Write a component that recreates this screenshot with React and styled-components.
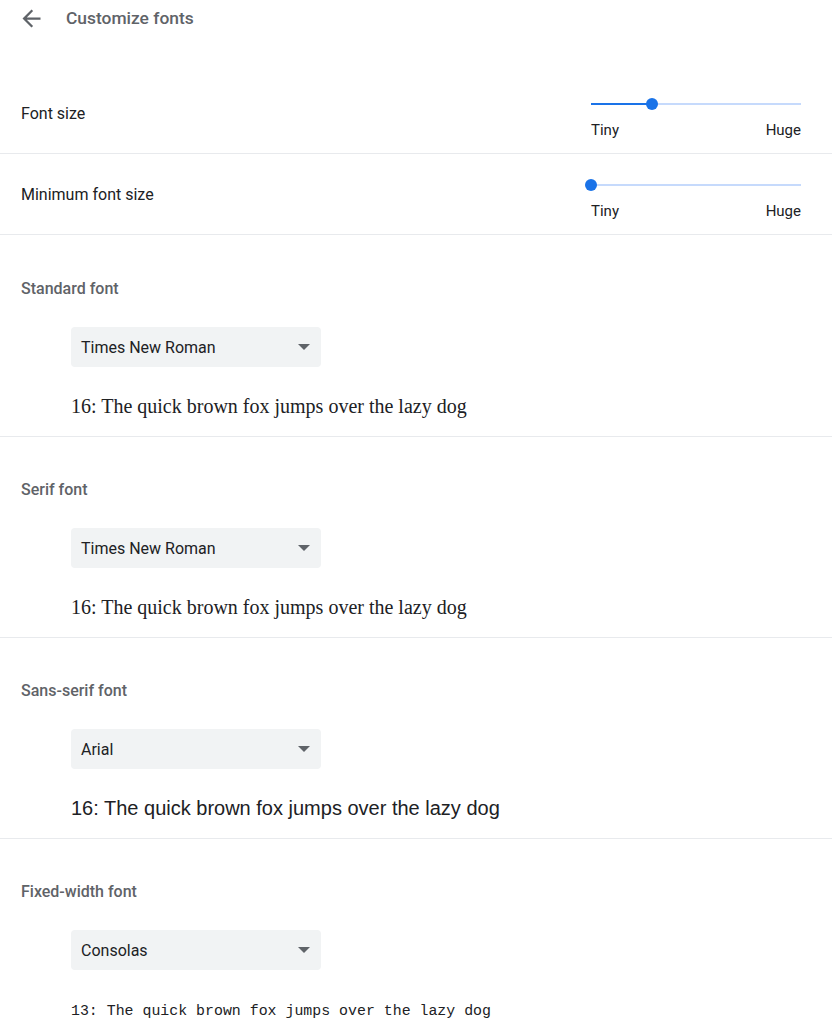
import React from "react";
import styled, { createGlobalStyle } from "styled-components";

const Global = createGlobalStyle`
  html, body { margin: 0; padding: 0; background: #fff; }
  body { font-family: Roboto, "Noto Sans", Arial, sans-serif; color: #202124; }
`;

const Page = styled.div`
  width: 832px;
  display: flex;
  flex-direction: column;
`;

const Header = styled.div`
  height: 36px;
  display: flex;
  align-items: center;
  padding-left: 18px;
`;

const BackButton = styled.button`
  border: 0;
  background: none;
  padding: 0;
  margin: 0;
  width: 27px;
  height: 27px;
  display: flex;
  align-items: center;
  justify-content: center;
  color: #5f6368;
  cursor: pointer;
`;

const Title = styled.h1`
  margin: 0 0 0 21px;
  font-size: 17.4px;
  font-weight: 500;
  color: #5f6368;
`;

const SliderList = styled.div`
  margin-top: 37px;
  display: flex;
  flex-direction: column;
`;

const Row = styled.div`
  height: 80px;
  border-bottom: 1px solid #e8eaed;
  display: flex;
  align-items: center;
  justify-content: space-between;
  padding: 0 31px 0 21px;
`;

const RowLabel = styled.div`
  font-size: 16px;
  color: #202124;
`;

const SliderBox = styled.div`
  width: 210px;
  display: flex;
  flex-direction: column;
  margin-top: 8px;
`;

const Track = styled.div`
  position: relative;
  height: 16px;
  display: flex;
  align-items: center;
`;

const TrackBar = styled.div`
  width: 100%;
  height: 2px;
  background: #c6dafc;
  position: relative;
`;

const ActiveBar = styled.div`
  position: absolute;
  left: 0;
  top: 0;
  height: 2px;
  background: #1a73e8;
`;

const Thumb = styled.div`
  position: absolute;
  top: 50%;
  width: 12px;
  height: 12px;
  margin: -6px 0 0 -6px;
  border-radius: 50%;
  background: #1a73e8;
`;

const Ticks = styled.div`
  display: flex;
  justify-content: space-between;
  font-size: 15px;
  color: #202124;
  margin-top: 10px;
  line-height: 16px;
`;

const Section = styled.section`
  padding: ${(p) => (p.$first ? "44px" : "43px")} 0 18px 21px;
  border-bottom: ${(p) => (p.$last ? "none" : "1px solid #e8eaed")};
  display: flex;
  flex-direction: column;
`;

const SectionTitle = styled.h2`
  margin: 0;
  font-size: 16px;
  line-height: 20px;
  font-weight: 500;
  color: #5f6368;
`;

const Indent = styled.div`
  padding-left: 50px;
  display: flex;
  flex-direction: column;
`;

const Select = styled.div`
  margin-top: 28px;
  width: 250px;
  height: 40px;
  box-sizing: border-box;
  background: #f1f3f4;
  border-radius: 4px;
  display: flex;
  align-items: center;
  justify-content: space-between;
  padding: 0 10px 0 10px;
  font-size: 16px;
  color: #202124;
`;

const Caret = styled.span`
  width: 0;
  height: 0;
  border-left: 6px solid transparent;
  border-right: 6px solid transparent;
  border-top: 6px solid #5f6368;
  margin-right: 1px;
`;

const Sample = styled.div`
  margin-top: ${(p) => p.$offset}px;
  height: 24px;
  display: flex;
  align-items: center;
  white-space: nowrap;
  color: #202124;
  font-family: ${(p) => p.$family};
  font-size: ${(p) => p.$size}px;
`;

function Slider({ value }) {
  return (
    <SliderBox>
      <Track>
        <TrackBar>
          <ActiveBar style={{ width: `${value}%` }} />
          <Thumb style={{ left: `${value}%` }} />
        </TrackBar>
      </Track>
      <Ticks>
        <span>Tiny</span>
        <span>Huge</span>
      </Ticks>
    </SliderBox>
  );
}

const fonts = [
  { title: "Standard font", value: "Times New Roman", family: '"Liberation Serif", serif', size: 20, offset: 27, text: "16: The quick brown fox jumps over the lazy dog" },
  { title: "Serif font", value: "Times New Roman", family: '"Liberation Serif", serif', size: 20, offset: 27, text: "16: The quick brown fox jumps over the lazy dog" },
  { title: "Sans-serif font", value: "Arial", family: '"Liberation Sans", Arial, sans-serif', size: 20, offset: 27, text: "16: The quick brown fox jumps over the lazy dog" },
  { title: "Fixed-width font", value: "Consolas", family: '"Liberation Mono", monospace', size: 14.9, offset: 29, text: "13: The quick brown fox jumps over the lazy dog" },
];

export default function App() {
  return (
    <Page>
      <Global />
      <Header>
        <BackButton aria-label="Back">
          <svg width="27" height="27" viewBox="0 0 24 24" fill="currentColor">
            <path d="M20 11H7.83l5.59-5.59L12 4l-8 8 8 8 1.41-1.41L7.83 13H20v-2z" />
          </svg>
        </BackButton>
        <Title>Customize fonts</Title>
      </Header>
      <SliderList>
        <Row>
          <RowLabel>Font size</RowLabel>
          <Slider value={29} />
        </Row>
        <Row>
          <RowLabel>Minimum font size</RowLabel>
          <Slider value={0} />
        </Row>
      </SliderList>
      {fonts.map((f, i) => (
        <Section key={f.title} $first={i === 0} $last={i === fonts.length - 1}>
          <SectionTitle>{f.title}</SectionTitle>
          <Indent>
            <Select>
              <span>{f.value}</span>
              <Caret />
            </Select>
            <Sample $family={f.family} $size={f.size} $offset={f.offset}>{f.text}</Sample>
          </Indent>
        </Section>
      ))}
    </Page>
  );
}
